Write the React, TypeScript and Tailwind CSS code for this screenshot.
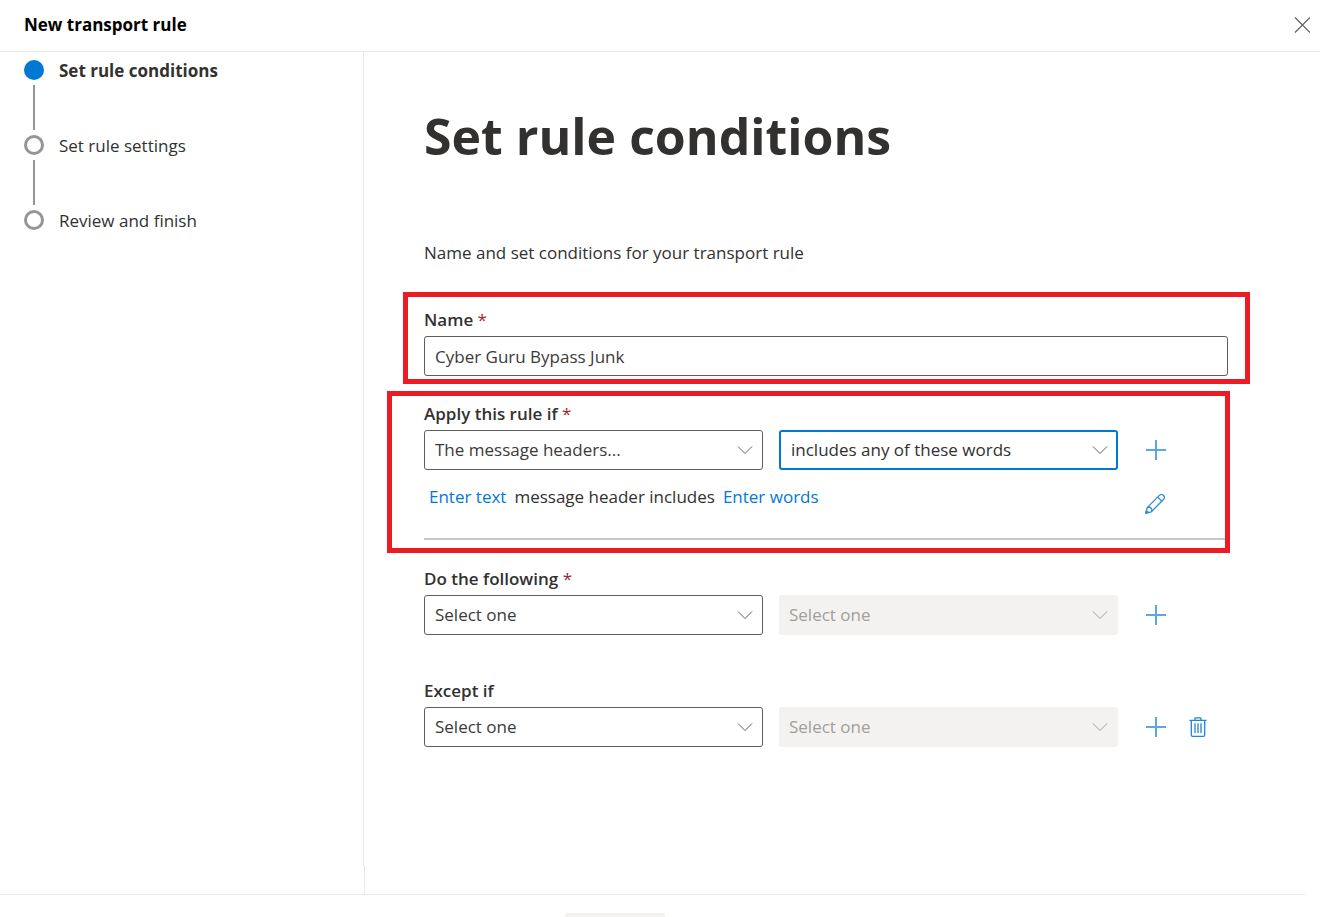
import React, { useState } from 'react';

interface Step {
  label: string;
  current?: boolean;
}

const steps: Step[] = [
  { label: 'Set rule conditions', current: true },
  { label: 'Set rule settings' },
  { label: 'Review and finish' },
];

function PlusIcon() {
  return (
    <svg className="w-5 h-5" viewBox="0 0 20 20" fill="none" stroke="#5ba6e4" strokeWidth="2">
      <path d="M10 0v20M0 10h20" />
    </svg>
  );
}

function PencilIcon() {
  return (
    <svg className="w-5 h-5" viewBox="0 0 20 20" fill="none" stroke="#2b8edd" strokeWidth="1.3" strokeLinejoin="round">
      <path d="M0.8 19.2 2.2 13.6 14.4 1.4a2.9 2.9 0 0 1 4.1 4.1L6.3 17.8Z" />
      <path d="M2.2 13.6a3 3 0 0 1 4.1 4.2M12.7 3.1l4.1 4.1" />
      <path d="M0.8 19.2 1.5 16.6 3.3 18.5Z" fill="#2b8edd" />
    </svg>
  );
}

function TrashIcon() {
  return (
    <svg className="w-[18px] h-5" viewBox="0 0 18 20" fill="none" stroke="#1c86db" strokeWidth="1.3">
      <path d="M0.5 3.3h17M6 3V1.6a.8.8 0 0 1 .8-.8h4.4a.8.8 0 0 1 .8.8V3" />
      <path d="M2.3 3.3v14.6c0 .8.6 1.4 1.4 1.4h10.6c.8 0 1.4-.6 1.4-1.4V3.3" />
      <path d="M6 6.2v9.8M9 6.2v9.8M12 6.2v9.8" />
    </svg>
  );
}

interface DropdownProps {
  id?: string;
  label: string;
  value: string;
  disabled?: boolean;
  active?: boolean;
}

function Dropdown({ id, label, value, disabled, active }: DropdownProps) {
  let look = 'border border-[#605e5c] px-2.5 text-[#3b3a39]';
  if (active) look = 'border-2 border-[#0078d4] px-2.5 text-[#323130]';
  if (disabled) look = 'bg-[#f3f2f1] px-2.5 text-[#a19f9d]';

  return (
    <div className="relative flex-1">
      <select
        id={id}
        aria-label={id ? undefined : label}
        disabled={disabled}
        className={`block h-10 w-full appearance-none rounded-[3px] outline-none opacity-100 ${look}`}
      >
        <option>{value}</option>
      </select>
      <svg
        className="pointer-events-none absolute right-2.5 top-4 h-2 w-4"
        viewBox="0 0 16 8"
        fill="none"
        stroke={disabled ? '#a19f9d' : '#605e5c'}
        strokeWidth="1"
      >
        <path d="M1 0.5l7 7 7-7" />
      </svg>
    </div>
  );
}

interface ConditionRowProps {
  id: string;
  label: string;
  required?: boolean;
  removable?: boolean;
  first?: string;
  second?: string;
}

function ConditionRow({ id, label, required, removable, first = 'Select one', second }: ConditionRowProps) {
  return (
    <div>
      <label htmlFor={id} className="mb-1 block font-semibold">
        {label} {required && <span className="font-normal text-[#a4262c]">*</span>}
      </label>
      <div className="flex">
        <div className="flex flex-1 gap-4">
          <Dropdown id={id} label={label} value={first} />
          <Dropdown label={`${label} option`} value={second ?? 'Select one'} disabled={!second} active={!!second} />
        </div>
        <div className="flex w-[107px] pl-[17px]">
          <button type="button" aria-label="Add" className="flex h-10 w-[42px] items-center justify-center">
            <PlusIcon />
          </button>
          {removable && (
            <button type="button" aria-label="Remove" className="flex h-10 w-[42px] items-center justify-center">
              <TrashIcon />
            </button>
          )}
        </div>
      </div>
    </div>
  );
}

export default function App() {
  const [name, setName] = useState('Cyber Guru Bypass Junk');

  return (
    <div className="flex h-screen flex-col overflow-hidden bg-white font-['Open_Sans','Noto_Sans',sans-serif] text-[17px] leading-6 text-[#323130]">
      <header className="flex h-[52px] shrink-0 items-center justify-between border-b border-[#eaeaea] pb-0.5 pl-6 pr-2.5">
        <h2 className="font-bold text-black">New transport rule</h2>
        <button type="button" aria-label="Close" className="p-0">
          <svg className="h-4 w-4" viewBox="0 0 16 16" fill="none" stroke="#605e5c" strokeWidth="1.2">
            <path d="M1 0.5l15 15M16 0.5l-15 15" />
          </svg>
        </button>
      </header>

      <div className="flex min-h-0 flex-1">
        <nav className="flex w-[365px] shrink-0 flex-col">
          <ol className="mr-px flex-1 border-r border-[#eaeaea] pl-6 pt-2">
            {steps.map((step, i) => (
              <li key={step.label} className="flex h-[75px] gap-[15px] leading-[22px]">
                <div className="flex w-5 flex-col items-center">
                  <span
                    className={`h-5 w-5 shrink-0 rounded-full ${
                      step.current ? 'bg-[#0078d4]' : 'border-3 border-[#979593]'
                    }`}
                  />
                  {i < steps.length - 1 && <span className="my-[5px] w-0.5 flex-1 bg-[#979593]" />}
                </div>
                <span className={step.current ? 'font-bold' : ''}>{step.label}</span>
              </li>
            ))}
          </ol>
          <div className="h-7 border-r border-[#eaeaea]" />
        </nav>

        <main className="min-w-0 flex-1 pl-[59px] pr-[92px] pt-[52px]">
          <h1 className="text-[50px] font-bold leading-[64px]">Set rule conditions</h1>
          <p className="mt-[73px]">Name and set conditions for your transport rule</p>

          <form onSubmit={(e) => e.preventDefault()}>
            {/* Highlighted: rule name */}
            <section className="-ml-[21px] -mr-[22px] mt-[27px] border-5 border-[#ed1c24] pb-[3px] pl-4 pr-[17px] pt-[11px]">
              <label htmlFor="rule-name" className="mb-1 block font-semibold">
                Name <span className="font-normal text-[#a4262c]">*</span>
              </label>
              <input
                id="rule-name"
                type="text"
                value={name}
                onChange={(e) => setName(e.target.value)}
                className="block h-10 w-full rounded-[3px] border border-[#605e5c] px-2.5 text-[#3b3a39] outline-none"
              />
            </section>

            {/* Highlighted: message header condition */}
            <section className="-ml-[37px] -mr-0.5 mt-[7px] border-5 border-[#ed1c24] pb-2 pl-8 pt-1.5">
              <ConditionRow
                id="apply-if"
                label="Apply this rule if"
                required
                first="The message headers..."
                second="includes any of these words"
              />
              <div className="flex h-[70px] border-b-2 border-[#c8c8c8] pt-[15px]">
                <p className="flex flex-1 gap-2 pl-[5px]">
                  <a href="#text" className="text-[#0078d4]">Enter text</a>
                  <span>message header includes</span>
                  <a href="#words" className="text-[#0078d4]">Enter words</a>
                </p>
                <div className="w-[107px] pl-4">
                  <button type="button" aria-label="Edit" className="flex h-[38px] w-[42px] items-center justify-center">
                    <PencilIcon />
                  </button>
                </div>
              </div>
            </section>

            <div className="flex flex-col gap-11 pr-[3px] pt-[14px]">
              <ConditionRow id="do-following" label="Do the following" required />
              <ConditionRow id="except-if" label="Except if" removable />
            </div>
          </form>
        </main>
      </div>

      <footer className="mr-[15px] flex h-[23px] shrink-0 border-t border-[#eaeaea] pl-[565px] pt-[18px]">
        <button type="button" aria-label="Back" className="h-10 w-[100px] shrink-0 rounded-[3px] bg-[#f3f2f1]" />
      </footer>
    </div>
  );
}
